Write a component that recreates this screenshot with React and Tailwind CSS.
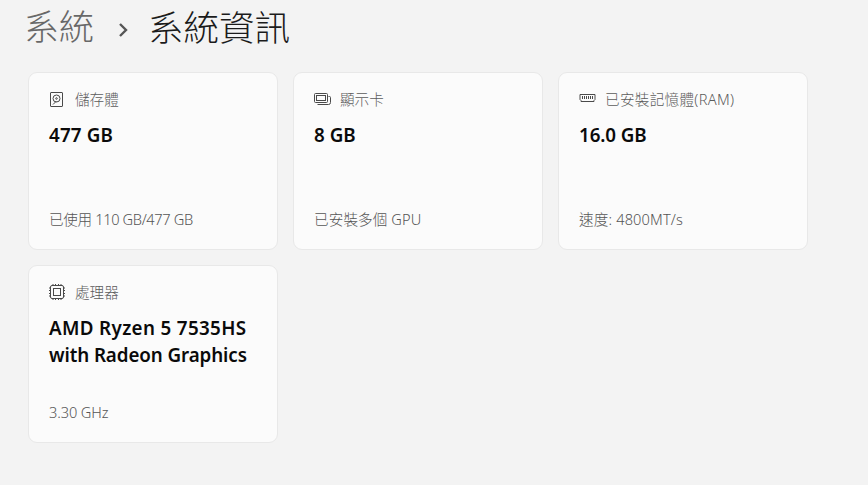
const CJK = '"Noto Sans", "Noto Sans CJK TC", sans-serif';

function Storage() {
  return (
    <svg width="16" height="16" viewBox="0 0 16 16" fill="none" stroke="#4a4a4a" strokeWidth="1">
      <rect x="1.5" y="1.5" width="12" height="14" rx="0.5" />
      <circle cx="7.5" cy="7.5" r="3.5" />
      <circle cx="7.5" cy="7.5" r="0.8" />
      <path d="M4 13.5 L7.5 10" />
    </svg>
  );
}
function Gpu() {
  return (
    <svg width="17" height="16" viewBox="0 0 17 16" fill="none" stroke="#4a4a4a" strokeWidth="1">
      <rect x="0.5" y="2.5" width="13" height="9" rx="1" />
      <rect x="2.5" y="4.5" width="9" height="5" />
      <path d="M14.5 5.5 h1 a1 1 0 0 1 1 1 v5 a2 2 0 0 1 -2 2 H3.5" />
    </svg>
  );
}
function Ram() {
  return (
    <svg width="17" height="16" viewBox="0 0 17 16" fill="none" stroke="#4a4a4a" strokeWidth="1">
      <path d="M1 3.5 H16 V8.5 L15 9.5 V10.5 H2 V9.5 L1 8.5 Z" />
      <path d="M3.5 5 V8 M5.5 5 V8 M7.5 5 V8 M9.5 5 V8 M11.5 5 V8 M13.5 5 V8" />
    </svg>
  );
}
function Cpu() {
  return (
    <svg width="16" height="16" viewBox="0 0 16 16" fill="none" stroke="#4a4a4a" strokeWidth="1">
      <rect x="1.5" y="1.5" width="13" height="13" rx="1.5" />
      <rect x="4.5" y="4.5" width="7" height="7" />
      <path d="M4 0 V1.5 M6.5 0 V1.5 M9.5 0 V1.5 M12 0 V1.5 M4 14.5 V16 M6.5 14.5 V16 M9.5 14.5 V16 M12 14.5 V16 M0 4 H1.5 M0 6.5 H1.5 M0 9.5 H1.5 M0 12 H1.5 M14.5 4 H16 M14.5 6.5 H16 M14.5 9.5 H16 M14.5 12 H16" />
    </svg>
  );
}

function Card({ icon, label, labelClass = "", value, sub, subClass = "" }) {
  return (
    <div className="flex h-[178px] w-[250px] flex-col rounded-[9px] border border-[#e8e8e8] bg-[#fbfbfb] pl-5 pr-2">
      <div className="mt-[18px] flex h-4 items-center">
        <span className="flex w-[26px] shrink-0">{icon}</span>
        <span className={`text-[14.6px] leading-4 font-light text-[#5c5c5c] ${labelClass}`}>{label}</span>
      </div>
      <div className="mt-[15px] text-[18.8px] leading-[27px] font-semibold text-[#0a0a0a]">{value}</div>
      <div className={`mt-auto mb-[20px] text-[14.6px] leading-5 font-light text-[#555555] ${subClass}`}>{sub}</div>
    </div>
  );
}

export default function App() {
  return (
    <div className="h-[485px] w-[868px] overflow-hidden bg-[#f3f3f3] pl-[28px]" style={{ fontFamily: CJK }}>
      <div className="-ml-[4px] flex h-[72px] items-start pt-[5px] text-[35px] leading-[44px] font-light">
        <span className="text-[#686868]">系統</span>
        <svg className="mt-[17px] ml-[24px] mr-[19px]" width="11" height="16" viewBox="0 0 11 16" fill="none" stroke="#555555" strokeWidth="2.4">
          <path d="M2 2 L8 8 L2 14" />
        </svg>
        <span className="text-[35.5px] text-[#1b1b1b]">系統資訊</span>
      </div>
      <div className="grid grid-cols-[250px_250px_250px] gap-[15px]">
        <Card icon={<Storage />} label="儲存體" value={<span className="tracking-[0.15px]">477 GB</span>} sub="已使用 110 GB/477 GB" subClass="tracking-[-0.35px]" />
        <Card icon={<Gpu />} label="顯示卡" value="8 GB" sub="已安裝多個 GPU" subClass="tracking-[0.1px]" />
        <Card icon={<Ram />} label="已安裝記憶體(RAM)" labelClass="tracking-[0.3px]" value={<span className="tracking-[-0.1px]">16.0 GB</span>} sub="速度: 4800MT/s" subClass="tracking-[0.15px]" />
        <Card icon={<Cpu />} label="處理器" value={<><span className="tracking-[0.35px]">AMD Ryzen 5 7535HS</span><br /><span className="tracking-[-0.1px]">with Radeon Graphics</span></>} sub="3.30 GHz" subClass="tracking-[-0.1px]" />
      </div>
    </div>
  );
}
